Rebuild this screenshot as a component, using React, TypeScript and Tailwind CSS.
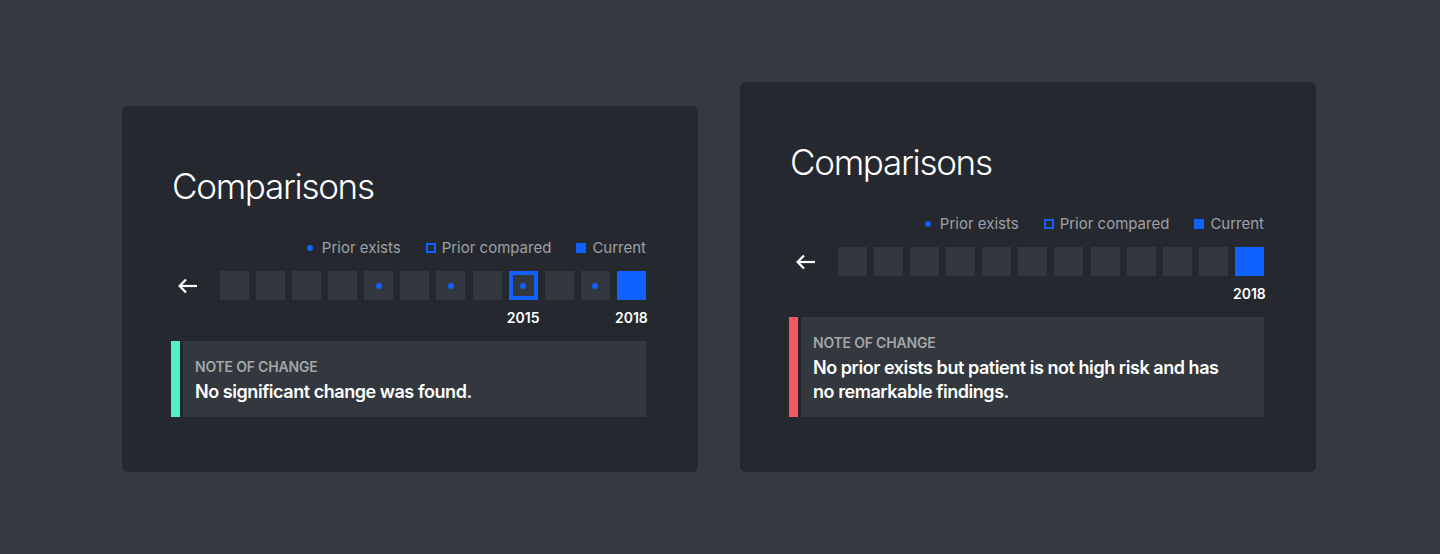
import React from 'react';

type Slot = 'empty' | 'prior' | 'compared' | 'current';

const font = { fontFamily: '"Inter", "Liberation Sans", sans-serif' };

function ArrowLeft() {
  return (
    <svg width="20" height="16" viewBox="0 0 20 16" fill="none" stroke="white" strokeWidth="2.2">
      <path d="M19 8H2" />
      <path d="M8 1.5L1.6 8L8 14.5" />
    </svg>
  );
}

function Square({ kind, year }: { kind: Slot; year?: string }) {
  return (
    <div className="flex w-[29px] flex-col items-center">
      {kind === 'current' && <div className="h-[29px] w-[29px] bg-[#0f62fe]" />}
      {kind === 'compared' && (
        <div className="flex h-[29px] w-[29px] items-center justify-center border-[4px] border-[#0f62fe] bg-[#33383e]">
          <div className="h-[6px] w-[6px] rounded-full bg-[#0f62fe]" />
        </div>
      )}
      {kind === 'prior' && (
        <div className="flex h-[29px] w-[29px] items-center justify-center bg-[#33383e]">
          <div className="h-[6px] w-[6px] rounded-full bg-[#0f62fe]" />
        </div>
      )}
      {kind === 'empty' && <div className="h-[29px] w-[29px] bg-[#33383e]" />}
      <div className="mt-[9px] h-[18px] whitespace-nowrap text-[14px] leading-[18px] font-semibold text-white">
        {year}
      </div>
    </div>
  );
}

function Legend() {
  return (
    <div className="flex justify-end gap-[25px] text-[15px] leading-5 text-[#9da1a6]">
      <div className="flex items-center gap-[7px]">
        <div className="flex h-[10px] w-[10px] items-center justify-center">
          <div className="h-[6px] w-[6px] rounded-full bg-[#0f62fe]" />
        </div>
        <span>Prior exists</span>
      </div>
      <div className="flex items-center gap-[6px]">
        <div className="h-[10px] w-[10px] border-2 border-[#0f62fe]" />
        <span>Prior compared</span>
      </div>
      <div className="flex items-center gap-[6px]">
        <div className="h-[10px] w-[10px] bg-[#0f62fe]" />
        <span>Current</span>
      </div>
    </div>
  );
}

function Card({
  slots,
  accent,
  note,
}: {
  slots: { kind: Slot; year?: string }[];
  accent: string;
  note: React.ReactNode;
}) {
  return (
    <div className="w-[576px] rounded-md bg-[#25292f] pt-[58px] pr-[52px] pb-[55px] pl-[49px]">
      <h2 className="pl-[1px] text-[35px] leading-[44px] font-light tracking-[-1.3px] text-white">Comparisons</h2>
      <div className="mt-[30px]">
        <Legend />
      </div>
      <div className="mt-[13px] flex items-start">
        <div className="flex h-[29px] w-[49px] items-center pl-[7px]">
          <ArrowLeft />
        </div>
        <div className="flex flex-1 justify-between">
          {slots.map((s, i) => (
            <Square key={i} kind={s.kind} year={s.year} />
          ))}
        </div>
      </div>
      <div className="mt-[14px] flex gap-[3px]">
        <div className={`w-[9px] ${accent}`} />
        <div className="flex-1 bg-[#33383e] pt-[17px] pr-4 pb-[13px] pl-3">
          <div className="text-[14px] leading-[18px] font-semibold tracking-[-0.2px] text-[#a3a6aa]">NOTE OF CHANGE</div>
          <div className="mt-[4px] text-[18px] leading-6 font-semibold tracking-[-0.45px] text-white">{note}</div>
        </div>
      </div>
    </div>
  );
}

const first: { kind: Slot; year?: string }[] = [
  { kind: 'empty' },
  { kind: 'empty' },
  { kind: 'empty' },
  { kind: 'empty' },
  { kind: 'prior' },
  { kind: 'empty' },
  { kind: 'prior' },
  { kind: 'empty' },
  { kind: 'compared', year: '2015' },
  { kind: 'empty' },
  { kind: 'prior' },
  { kind: 'current', year: '2018' },
];

const second: { kind: Slot; year?: string }[] = [
  ...Array.from({ length: 11 }, () => ({ kind: 'empty' as Slot })),
  { kind: 'current', year: '2018' },
];

export default function App() {
  return (
    <div
      className="flex h-[554px] w-full items-end justify-center gap-[42px] bg-[#343a40] pr-[2px] pb-[82px]"
      style={font}
    >
      <Card
        slots={first}
        accent="bg-[#4ff2c6]"
        note="No significant change was found."
      />
      <Card
        slots={second}
        accent="bg-[#f25a62]"
        note={
          <>
            No prior exists but patient is not high risk and has
            <br />
            no remarkable findings.
          </>
        }
      />
    </div>
  );
}
